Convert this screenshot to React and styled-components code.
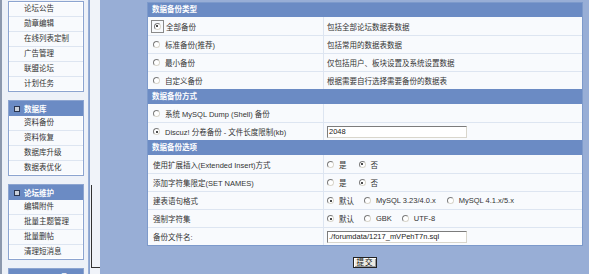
import React from 'react'
import styled, { createGlobalStyle } from 'styled-components'

const GlobalStyle = createGlobalStyle`
  html, body {
    margin: 0;
    padding: 0;
    width: 589px;
    height: 274px;
    overflow: hidden;
    background: #98aed6;
  }
  body {
    font-family: "Liberation Sans", "Noto Sans CJK SC", sans-serif;
    font-size: 7.5px;
    color: #222;
  }
`

const MENU = [
  { title: null, items: ['论坛公告', '勋章编辑', '在线列表定制', '广告管理', '联盟论坛', '计划任务'] },
  { title: '数据库', items: ['资料备份', '资料恢复', '数据库升级', '数据表优化'] },
  { title: '论坛维护', items: ['编辑附件', '批量主题管理', '批量删帖', '清理短消息'] },
  { title: 'Discuz! 工具', items: ['文件权限检查', '更新缓存'] },
]

const BACKUP_TYPES = [
  { label: '全部备份', desc: '包括全部论坛数据表数据', checked: true },
  { label: '标准备份(推荐)', desc: '包括常用的数据表数据' },
  { label: '最小备份', desc: '仅包括用户、板块设置及系统设置数据' },
  { label: '自定义备份', desc: '根据需要自行选择需要备份的数据表' },
]

const Page = styled.div`
  display: flex;
  width: 589px;
  height: 274px;
  overflow: hidden;
`

const Sidebar = styled.div`
  width: 80px;
  flex-shrink: 0;
  background: #edf1f8;
  border-left: 2px solid #8c98ad;
  padding: 1px 0 0 6px;
  display: flex;
  flex-direction: column;
  gap: 8px;
`

const MenuBox = styled.div`
  width: 74px;
  border: 1px solid #8ca4d0;
  box-shadow: inset 0 0 0 1px #fff;
  background: #f8fafd;
  flex-shrink: 0;
`

const MenuHead = styled.div`
  height: 15px;
  display: flex;
  align-items: center;
  gap: 4px;
  padding-left: 5px;
  background: #6b8bc4;
  color: #fff;
  font-weight: bold;
  white-space: nowrap;
`

const HeadIcon = styled.span`
  width: 4px;
  height: 4px;
  border: 1px solid #2a3550;
  background: #c9cfd9;
  flex-shrink: 0;
`

const MenuItem = styled.div`
  height: 14px;
  line-height: 14px;
  padding-left: 15px;
  color: #333;
  white-space: nowrap;
  & + & {
    border-top: 1px solid #dde5f1;
  }
`

const Divider = styled.div`
  width: 10px;
  flex-shrink: 0;
  margin-left: 1px;
  border-left: 1px solid #88a2ce;
  background: #f0f3f9;
  display: flex;
  flex-direction: column;
`

const Track = styled.div`
  margin-top: auto;
  margin-bottom: 6px;
  height: 82px;
  margin-left: 1px;
  border-left: 1px solid #333;
  border-bottom: 1px solid #333;
`

const Main = styled.div`
  flex: 1;
  background: #98aed6;
  padding: 2px 6px 0 47px;
  display: flex;
  flex-direction: column;
  align-items: stretch;
`

const Table = styled.div`
  border: 1px solid #7d9acb;
  background: #f8fafd;
`

const SectionHead = styled.div`
  height: ${p => p.$h || 15}px;
  line-height: ${p => p.$h || 15}px;
  padding-left: 4px;
  background: #6b8bc4;
  color: #fff;
  font-weight: bold;
`

const Row = styled.div`
  box-sizing: border-box;
  display: grid;
  grid-template-columns: 175px 1fr;
  height: 18px;
  border-top: 1px solid #dde5f1;
  ${SectionHead} + & {
    border-top: none;
  }
`

const Cell = styled.div`
  display: flex;
  align-items: center;
  gap: 4px;
  padding-left: ${p => (p.$value ? 3 : 5)}px;
  white-space: nowrap;
  color: #333;
  & + & {
    border-left: 1px solid #dde5f1;
  }
`

const Focus = styled.span`
  display: inline-flex;
  align-items: center;
  justify-content: center;
  width: 11px;
  height: 11px;
  margin: 0 -2px 0 -2px;
  border: 1px solid #8a8a8a;
`

const Radio = styled.span`
  position: relative;
  width: 5px;
  height: 5px;
  border-radius: 50%;
  border: 1px solid;
  border-color: #7c7c7c #d9d6cc #d9d6cc #7c7c7c;
  background: #fff;
  flex-shrink: 0;
  margin-right: 1px;
  &::after {
    content: '';
    display: ${p => (p.$checked ? 'block' : 'none')};
    position: absolute;
    left: 1.5px;
    top: 1.5px;
    width: 2px;
    height: 2px;
    border-radius: 50%;
    background: #111;
  }
`

const Choice = styled.span`
  display: inline-flex;
  align-items: center;
  gap: 4px;
  margin-right: ${p => p.$gap || 6}px;
`

const Input = styled.div`
  width: 137px;
  height: 10px;
  line-height: 10px;
  border: 1px solid;
  border-color: #7c7c7c #d9d6cc #d9d6cc #7c7c7c;
  background: #fff;
  padding-left: 1px;
  color: #222;
  overflow: hidden;
`

const Footer = styled.div`
  display: flex;
  justify-content: center;
  padding-top: 11px;
`

const Button = styled.div`
  width: 22px;
  height: 9px;
  line-height: 9px;
  text-align: center;
  letter-spacing: 1px;
  border: 1px solid #222;
  box-shadow: inset 1px 1px 0 #fff, inset -1px -1px 0 #9a9a9a;
  background: #eceae2;
  color: #111;
`

const Option = ({ checked, label, gap }) => (
  <Choice $gap={gap}>
    <Radio $checked={checked} />
    {label}
  </Choice>
)

export default function App() {
  return (
    <>
      <GlobalStyle />
      <Page>
        <Sidebar>
          {MENU.map((group, i) => (
            <MenuBox key={i}>
              {group.title && (
                <MenuHead>
                  <HeadIcon />
                  {group.title}
                </MenuHead>
              )}
              {group.items.map(item => (
                <MenuItem key={item}>{item}</MenuItem>
              ))}
            </MenuBox>
          ))}
        </Sidebar>
        <Divider>
          <Track />
        </Divider>
        <Main>
          <Table>
            <SectionHead $h={14}>数据备份类型</SectionHead>
            {BACKUP_TYPES.map(t => (
              <Row key={t.label}>
                <Cell>
                  {t.checked ? (
                    <Focus>
                      <Radio $checked />
                    </Focus>
                  ) : (
                    <Radio />
                  )}
                  {t.label}
                </Cell>
                <Cell $value>{t.desc}</Cell>
              </Row>
            ))}

            <SectionHead>数据备份方式</SectionHead>
            <Row>
              <Cell>
                <Radio />
                系统 MySQL Dump (Shell) 备份
              </Cell>
              <Cell $value />
            </Row>
            <Row>
              <Cell>
                <Radio $checked />
                Discuz! 分卷备份 - 文件长度限制(kb)
              </Cell>
              <Cell $value>
                <Input>2048</Input>
              </Cell>
            </Row>

            <SectionHead>数据备份选项</SectionHead>
            <Row>
              <Cell>使用扩展插入(Extended Insert)方式</Cell>
              <Cell $value>
                <Option label="是" gap={8} />
                <Option label="否" checked />
              </Cell>
            </Row>
            <Row>
              <Cell>添加字符集限定(SET NAMES)</Cell>
              <Cell $value>
                <Option label="是" gap={8} />
                <Option label="否" checked />
              </Cell>
            </Row>
            <Row>
              <Cell>建表语句格式</Cell>
              <Cell $value>
                <Option label="默认" checked />
                <Option label="MySQL 3.23/4.0.x" gap={7} />
                <Option label="MySQL 4.1.x/5.x" />
              </Cell>
            </Row>
            <Row>
              <Cell>强制字符集</Cell>
              <Cell $value>
                <Option label="默认" checked />
                <Option label="GBK" />
                <Option label="UTF-8" />
              </Cell>
            </Row>
            <Row>
              <Cell>备份文件名:</Cell>
              <Cell $value>
                <Input>./forumdata/1217_mVPehT7n.sql</Input>
              </Cell>
            </Row>
          </Table>
          <Footer>
            <Button>提交</Button>
          </Footer>
        </Main>
      </Page>
    </>
  )
}
